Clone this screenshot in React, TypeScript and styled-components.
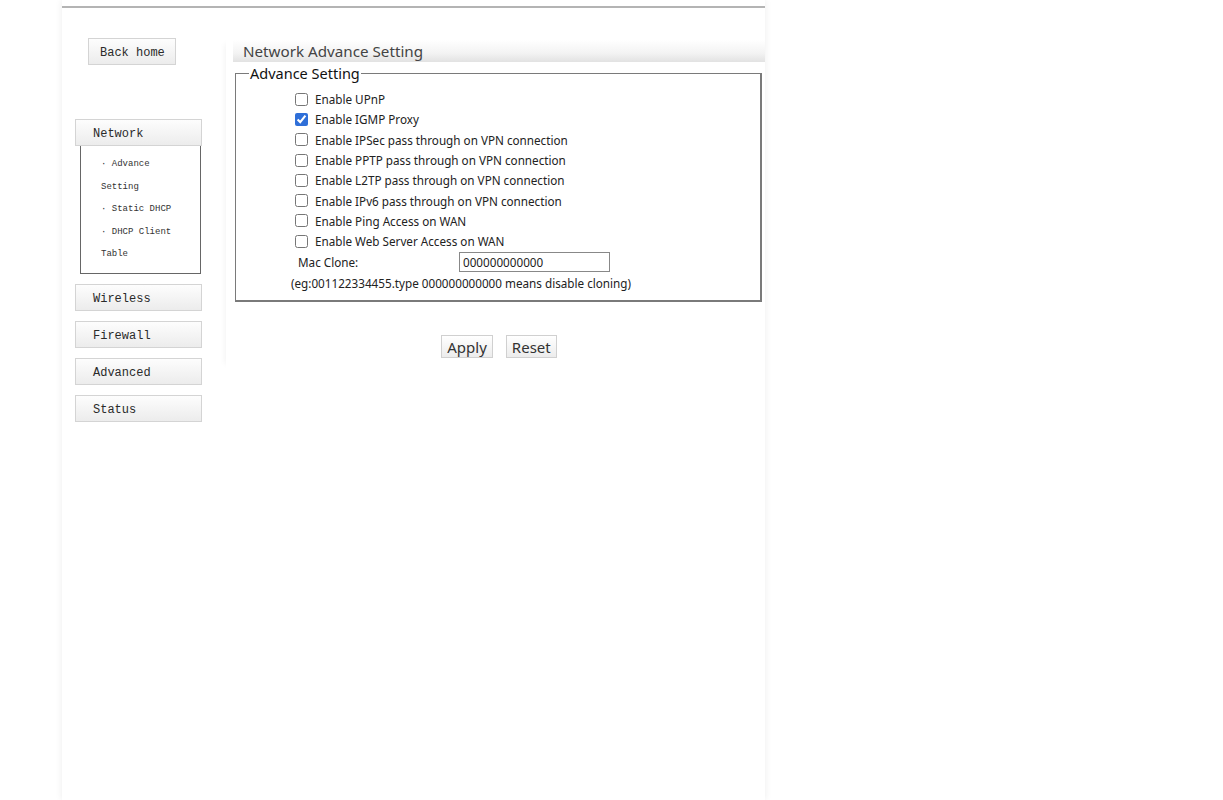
import React from "react";
import styled, { createGlobalStyle } from "styled-components";

const GlobalStyle = createGlobalStyle`
  html, body {
    margin: 0;
    padding: 0;
    background: #ffffff;
  }
  body {
    font-family: "Noto Sans", "Open Sans", sans-serif;
  }
`;

const menuItems = ["Wireless", "Firewall", "Advanced", "Status"];

const options = [
  { label: "Enable UPnP", checked: false },
  { label: "Enable IGMP Proxy", checked: true },
  { label: "Enable IPSec pass through on VPN connection", checked: false },
  { label: "Enable PPTP pass through on VPN connection", checked: false },
  { label: "Enable L2TP pass through on VPN connection", checked: false },
  { label: "Enable IPv6 pass through on VPN connection", checked: false },
  { label: "Enable Ping Access on WAN", checked: false },
  { label: "Enable Web Server Access on WAN", checked: false },
];

const App = () => {
  return (
    <>
      <GlobalStyle />
      <Page>
        <TopRule />
        <Body>
          <Sidebar>
            <BackHome type="button">Back home</BackHome>
            <MenuButton type="button" $first>
              Network
            </MenuButton>
            <SubMenu>
              <SubItem>· Advance Setting</SubItem>
              <SubItem>· Static DHCP</SubItem>
              <SubItem>· DHCP Client Table</SubItem>
            </SubMenu>
            {menuItems.map((item) => (
              <MenuButton key={item} type="button">
                {item}
              </MenuButton>
            ))}
          </Sidebar>
          <Main>
            <Header>Network Advance Setting</Header>
            <Fieldset>
              <Legend>Advance Setting</Legend>
              <Options>
                {options.map((o) => (
                  <OptionRow key={o.label}>
                    <Checkbox type="checkbox" defaultChecked={o.checked} />
                    <span>{o.label}</span>
                  </OptionRow>
                ))}
              </Options>
              <MacRow>
                <MacLabel>Mac Clone:</MacLabel>
                <MacInput type="text" defaultValue="000000000000" />
              </MacRow>
              <Note>(eg:001122334455.type 000000000000 means disable cloning)</Note>
            </Fieldset>
            <Actions>
              <ActionButton type="button">Apply</ActionButton>
              <ActionButton type="button">Reset</ActionButton>
            </Actions>
          </Main>
        </Body>
      </Page>
    </>
  );
};

export default App;

const Page = styled.div`
  margin-left: 62px;
  width: 703px;
  min-height: 800px;
  background: #fff;
  box-shadow: 0 0 7px rgba(0, 0, 0, 0.08);
`;

const TopRule = styled.div`
  height: 6px;
  border-bottom: 2px solid #b4b4b4;
`;

const Body = styled.div`
  display: flex;
  align-items: flex-start;
`;

const Sidebar = styled.div`
  width: 127px;
  flex: none;
  padding: 30px 0 0 13px;
  display: flex;
  flex-direction: column;
  align-items: flex-start;
  font-family: "Liberation Mono", monospace;
  color: #333;
`;

const GreyButton = styled.button`
  box-sizing: border-box;
  height: 27px;
  border: 1px solid #d4d4d4;
  background: linear-gradient(#fdfdfd, #ececec);
  font-family: "Liberation Mono", monospace;
  font-size: 12px;
  color: #2a2a2a;
  text-align: left;
  cursor: pointer;
`;

const BackHome = styled(GreyButton)`
  width: 88px;
  margin-left: 13px;
  padding: 2px 0 0 11px;
`;

const MenuButton = styled(GreyButton)<{ $first?: boolean }>`
  width: 127px;
  margin-top: ${({ $first }) => ($first ? "54px" : "10px")};
  padding: 3px 0 0 17px;
`;

const SubMenu = styled.div`
  box-sizing: border-box;
  width: 121px;
  margin-left: 5px;
  height: 128px;
  border: 1px solid #666;
  border-top: none;
  padding: 7px 8px 0 19px;
  font-size: 9px;
  line-height: 22.5px;
  color: #333;
`;

const SubItem = styled.div`
  padding-left: 1px;
`;

const Main = styled.div`
  flex: none;
  margin-left: 24px;
  margin-top: 32px;
  width: 532px;
  padding: 0 0 0 7px;
  box-shadow: -5px 0 6px -4px rgba(0, 0, 0, 0.05);
`;

const Header = styled.div`
  height: 22px;
  line-height: 22px;
  padding-left: 10px;
  background: linear-gradient(#ffffff, #f3f3f3 60%, #e2e2e2);
  font-size: 15.2px;
  color: #444;
`;

const Fieldset = styled.fieldset`
  margin: 1px 3px 0 2px;
  padding: 0 10px 9px 10px;
  border-style: solid;
  border-color: #7a7a7a;
  border-width: 1px 2px 2px 1px;
`;

const Legend = styled.legend`
  padding: 0 1px;
  margin-left: 3px;
  font-size: 14.5px;
  color: #111;
`;

const Options = styled.div`
  display: flex;
  flex-direction: column;
  padding: 6px 0 0 45px;
`;

const OptionRow = styled.label`
  display: flex;
  align-items: center;
  height: 20.3px;
  font-size: 11.7px;
  color: #222;
  gap: 7px;
`;

const Checkbox = styled.input`
  width: 13px;
  height: 13px;
  margin: 0 0 0 4px;
  accent-color: #2f6fd8;
`;

const MacRow = styled.div`
  display: flex;
  align-items: center;
  padding: 0 0 0 52px;
  height: 22px;
`;

const MacLabel = styled.span`
  width: 161px;
  font-size: 11.7px;
  color: #222;
`;

const MacInput = styled.input`
  box-sizing: border-box;
  width: 151px;
  height: 20px;
  border: 1px solid #888;
  padding: 0 3px;
  font-family: "Noto Sans", sans-serif;
  font-size: 11.7px;
  color: #222;
`;

const Note = styled.div`
  padding: 2px 0 0 45px;
  font-size: 11.7px;
  color: #222;
`;

const Actions = styled.div`
  display: flex;
  justify-content: center;
  gap: 13px;
  padding: 33px 0 10px;
`;

const ActionButton = styled.button`
  height: 23px;
  padding: 0 5px;
  border: 1px solid #d0d0d0;
  background: linear-gradient(#ffffff, #ececec);
  font-family: "Noto Sans", sans-serif;
  font-size: 15px;
  color: #333;
  cursor: pointer;
`;
